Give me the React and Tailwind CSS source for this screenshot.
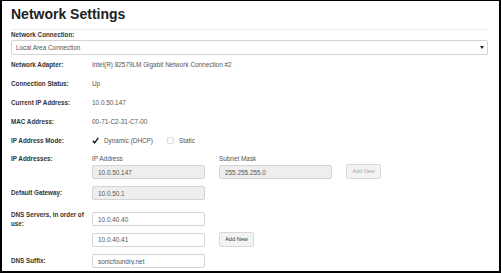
import React from 'react';

const Field = ({ value, disabled, className = '' }) => (
  <input
    readOnly
    value={value}
    className={`h-[14px] w-[113px] rounded-[2px] border px-[5px] text-[6.4px] text-[#555] outline-none ${
      disabled ? 'border-[#d4d4d4] bg-[#eeeeee]' : 'border-[#d4d4d4] bg-white'
    } ${className}`}
  />
);

const AddButton = ({ disabled }) => (
  <button
    type="button"
    className={`h-[15px] w-[35px] rounded-[2px] border border-[#d9d9d9] bg-[#f3f3f3] text-[5.6px] ${
      disabled ? 'text-[#aaa]' : 'text-[#333]'
    }`}
  >
    Add New
  </button>
);

const InfoRow = ({ label, value }) => (
  <div className="flex h-[19px] items-center">
    <div className="w-[81px] shrink-0 text-[6.3px] font-bold text-[#333]">{label}</div>
    <div className="text-[6.4px] text-[#555]">{value}</div>
  </div>
);

const App = () => (
  <div
    className="h-[273px] w-[501px] overflow-hidden border-t border-r-2 border-b-2 border-l-2 border-black bg-white pt-[5px] pr-[11px] pl-[9px]"
    style={{ fontFamily: '"Liberation Sans", Arial, sans-serif' }}
  >
    <h1 className="text-[14px] leading-[17px] font-bold text-[#222]">Network Settings</h1>
    <div className="mt-[6px] border-t border-[#eeeeee]" />

    <div className="mt-[1px] text-[6.3px] leading-[8px] font-bold text-[#333]">Network Connection:</div>
    <div className="mt-[1px] flex h-[15px] items-center justify-between rounded-[2px] border border-[#d4d4d4] bg-white pr-[3px] pl-[4px]">
      <span className="text-[6.4px] text-[#555]">Local Area Connection</span>
      <svg width="4" height="3" viewBox="0 0 4 3">
        <path d="M0 0h4L2 3z" fill="#222" />
      </svg>
    </div>

    <InfoRow label="Network Adapter:" value="Intel(R) 82579LM Gigabit Network Connection #2" />
    <InfoRow label="Connection Status:" value="Up" />
    <InfoRow label="Current IP Address:" value="10.0.50.147" />
    <InfoRow label="MAC Address:" value="00-71-C2-31-C7-00" />

    <div className="flex h-[19px] items-center">
      <div className="w-[81px] shrink-0 text-[6.3px] font-bold text-[#333]">IP Address Mode:</div>
      <div className="flex items-center text-[6.4px] text-[#555]">
        <svg width="7" height="7" viewBox="0 0 7 7" className="mr-[5px]">
          <path d="M0.8 3.8L2.6 5.8L6.3 0.9" fill="none" stroke="#111" strokeWidth="1.4" />
        </svg>
        <span>Dynamic (DHCP)</span>
        <span className="mr-[5px] ml-[14px] h-[7px] w-[7px] rounded-[1px] border border-[#e2e2e2] bg-[#fafafa]" />
        <span>Static</span>
      </div>
    </div>

    <div className="mt-[5px] flex">
      <div className="w-[81px] shrink-0 text-[6.3px] leading-[8px] font-bold text-[#333]">IP Addresses:</div>
      <div className="flex items-end gap-[14px]">
        <div className="flex flex-col">
          <span className="text-[6.4px] leading-[8px] text-[#555]">IP Address</span>
          <Field value="10.0.50.147" disabled className="mt-[2px]" />
        </div>
        <div className="flex flex-col">
          <span className="text-[6.4px] leading-[8px] text-[#555]">Subnet Mask</span>
          <Field value="255.255.255.0" disabled className="mt-[2px]" />
        </div>
        <AddButton disabled />
      </div>
    </div>

    <div className="mt-[7px] flex items-center">
      <div className="w-[81px] shrink-0 text-[6.3px] font-bold text-[#333]">Default Gateway:</div>
      <Field value="10.0.50.1" disabled />
    </div>

    <div className="mt-[10px] flex">
      <div className="w-[81px] shrink-0 pr-[4px] text-[6.3px] leading-[9px] font-bold text-[#333]">
        DNS Servers, in order of use:
      </div>
      <div className="flex flex-col pt-[2px]">
        <Field value="10.0.40.40" />
        <div className="mt-[6px] flex items-center gap-[14px]">
          <Field value="10.0.40.41" />
          <AddButton />
        </div>
      </div>
    </div>

    <div className="mt-[7px] flex items-center">
      <div className="w-[81px] shrink-0 text-[6.3px] font-bold text-[#333]">DNS Suffix:</div>
      <Field value="sonicfoundry.net" />
    </div>
  </div>
);

export default App;
